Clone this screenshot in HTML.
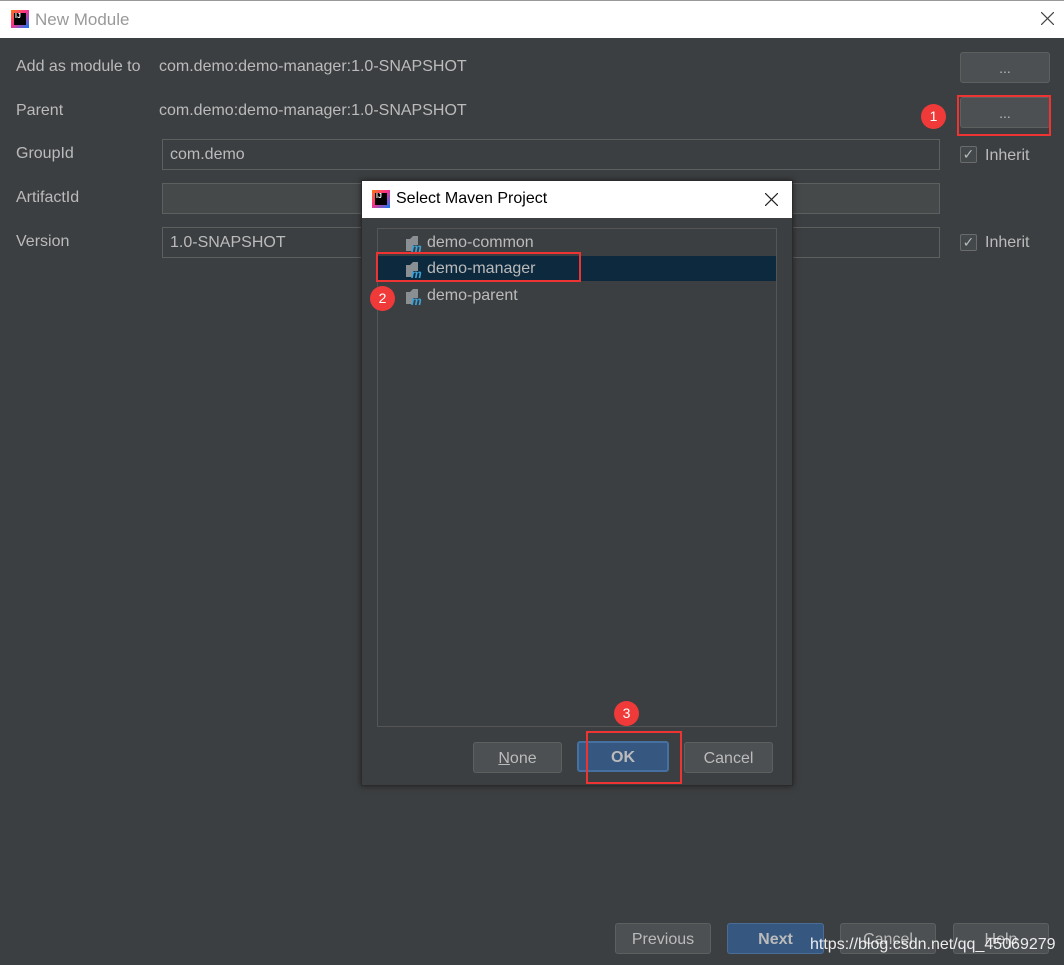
<!DOCTYPE html>
<html><head><meta charset="utf-8"><style>
*{margin:0;padding:0;box-sizing:border-box}
body{width:1064px;height:965px;background:#3c3f41;position:relative;overflow:hidden;font-family:"Liberation Sans","DejaVu Sans",sans-serif;font-size:16px;color:#bbbbbb}
.a{position:absolute}
.title{left:0;top:0;width:1064px;height:38px;background:#fff;border-top:1px solid #999}
.field{position:absolute;border:1px solid #5e6060;height:31px;padding:6px 7px;color:#bbbbbb}
.btn{position:absolute;border:1px solid #5e6060;background:#4c5052;border-radius:3px;text-align:center;line-height:31px;color:#bbbbbb;height:31px}
.red{position:absolute;border:2px solid #ee3333}
.badge{position:absolute;width:25px;height:25px;border-radius:50%;background:#f03a3a;color:#fff;font-size:14px;text-align:center;line-height:25px}
.cb{position:absolute;width:17px;height:17px;border:1px solid #6b6b6b;background:#43494a;border-radius:2px;color:#bbb;font-size:14px;line-height:15px;text-align:center}
.logo{position:absolute;width:18px;height:18px;background:linear-gradient(135deg,#f97a12,#fc318c 45%,#087cfa);}
.logo i{position:absolute;left:3px;top:3px;width:12px;height:12px;background:#000;color:#fff;font-size:7px;font-style:normal;font-weight:bold;line-height:8px;padding-left:1px}
.mi{position:absolute;width:18px;height:18px}
</style></head><body>
<div class="a title"></div>
<div class="logo" style="left:11px;top:10px"><i>IJ</i></div>
<div class="a" style="left:35px;top:10px;color:#999;font-size:17px">New Module</div>
<svg class="a" style="left:1041px;top:12px" width="13" height="13"><path d="M0 0L13 13M13 0L0 13" stroke="#444" stroke-width="1.2"/></svg>

<div class="a" style="left:16px;top:58px">Add as module to</div>
<div class="a" style="left:159px;top:58px">com.demo:demo-manager:1.0-SNAPSHOT</div>
<div class="a" style="left:16px;top:102px">Parent</div>
<div class="a" style="left:159px;top:102px">com.demo:demo-manager:1.0-SNAPSHOT</div>
<div class="a" style="left:16px;top:145px">GroupId</div>
<div class="a" style="left:16px;top:189px">ArtifactId</div>
<div class="a" style="left:16px;top:233px">Version</div>
<div class="field" style="left:162px;top:139px;width:778px">com.demo</div>
<div class="field" style="left:162px;top:183px;width:778px;background:#45494a"></div>
<div class="field" style="left:162px;top:227px;width:778px">1.0-SNAPSHOT</div>
<div class="btn" style="left:960px;top:52px;width:90px;font-size:14px">...</div>
<div class="btn" style="left:960px;top:97px;width:90px;font-size:14px">...</div>
<div class="red" style="left:957px;top:95px;width:94px;height:41px"></div>
<div class="badge" style="left:921px;top:104px">1</div>
<div class="cb" style="left:960px;top:146px">✓</div><div class="a" style="left:985px;top:147px">Inherit</div>
<div class="cb" style="left:960px;top:234px">✓</div><div class="a" style="left:985px;top:234px">Inherit</div>

<div class="btn" style="left:615px;top:923px;width:96px">Previous</div>
<div class="btn" style="left:727px;top:923px;width:97px;background:#365880;border-color:#4a6d96;font-weight:bold">Next</div>
<div class="btn" style="left:840px;top:923px;width:96px">Cancel</div>
<div class="btn" style="left:953px;top:923px;width:96px">Help</div>
<div class="a" style="left:810px;top:936px;color:#fff;font-size:16px;opacity:.9">https://blog.csdn.net/qq_45069279</div>

<!-- dialog -->
<div class="a" style="left:361px;top:180px;width:432px;height:606px;background:#3c3f41;border:1px solid #2b2b2b;box-shadow:0 0 6px rgba(0,0,0,.5)"></div>
<div class="a" style="left:362px;top:181px;width:430px;height:37px;background:#fff"></div>
<div class="logo" style="left:372px;top:190px"><i>IJ</i></div>
<div class="a" style="left:396px;top:190px;color:#000;font-size:16px">Select Maven Project</div>
<svg class="a" style="left:765px;top:193px" width="13" height="13"><path d="M0 0L13 13M13 0L0 13" stroke="#222" stroke-width="1.2"/></svg>
<div class="a" style="left:377px;top:228px;width:400px;height:499px;border:1px solid #555"></div>
<div class="a" style="left:378px;top:256px;width:398px;height:25px;background:#0d293e"></div>
<div class="a" style="left:427px;top:234px">demo-common</div>
<div class="a" style="left:427px;top:260px">demo-manager</div>
<div class="a" style="left:427px;top:287px">demo-parent</div>
<svg class="mi" style="left:405px;top:234px" viewBox="0 0 18 18"><path d="M1 5h4l3-3h5v9H8v6H1z" fill="#8a8f93"/><text x="6" y="18" font-size="12" font-style="italic" font-weight="bold" fill="#3aa3d9" font-family="Liberation Sans">m</text></svg>
<svg class="mi" style="left:405px;top:260px" viewBox="0 0 18 18"><path d="M1 5h4l3-3h5v9H8v6H1z" fill="#8a8f93"/><text x="6" y="18" font-size="12" font-style="italic" font-weight="bold" fill="#3aa3d9" font-family="Liberation Sans">m</text></svg>
<svg class="mi" style="left:405px;top:287px" viewBox="0 0 18 18"><path d="M1 5h4l3-3h5v9H8v6H1z" fill="#8a8f93"/><text x="6" y="18" font-size="12" font-style="italic" font-weight="bold" fill="#3aa3d9" font-family="Liberation Sans">m</text></svg>
<div class="red" style="left:376px;top:252px;width:205px;height:30px"></div>
<div class="badge" style="left:370px;top:286px">2</div>

<div class="btn" style="left:473px;top:742px;width:89px"><u>N</u>one</div>
<div class="btn" style="left:577px;top:741px;width:92px;background:#365880;border:2px solid #46709f;font-weight:bold;line-height:29px">OK</div>
<div class="btn" style="left:684px;top:742px;width:89px">Cancel</div>
<div class="red" style="left:586px;top:731px;width:96px;height:53px"></div>
<div class="badge" style="left:614px;top:701px">3</div>
</body></html>
